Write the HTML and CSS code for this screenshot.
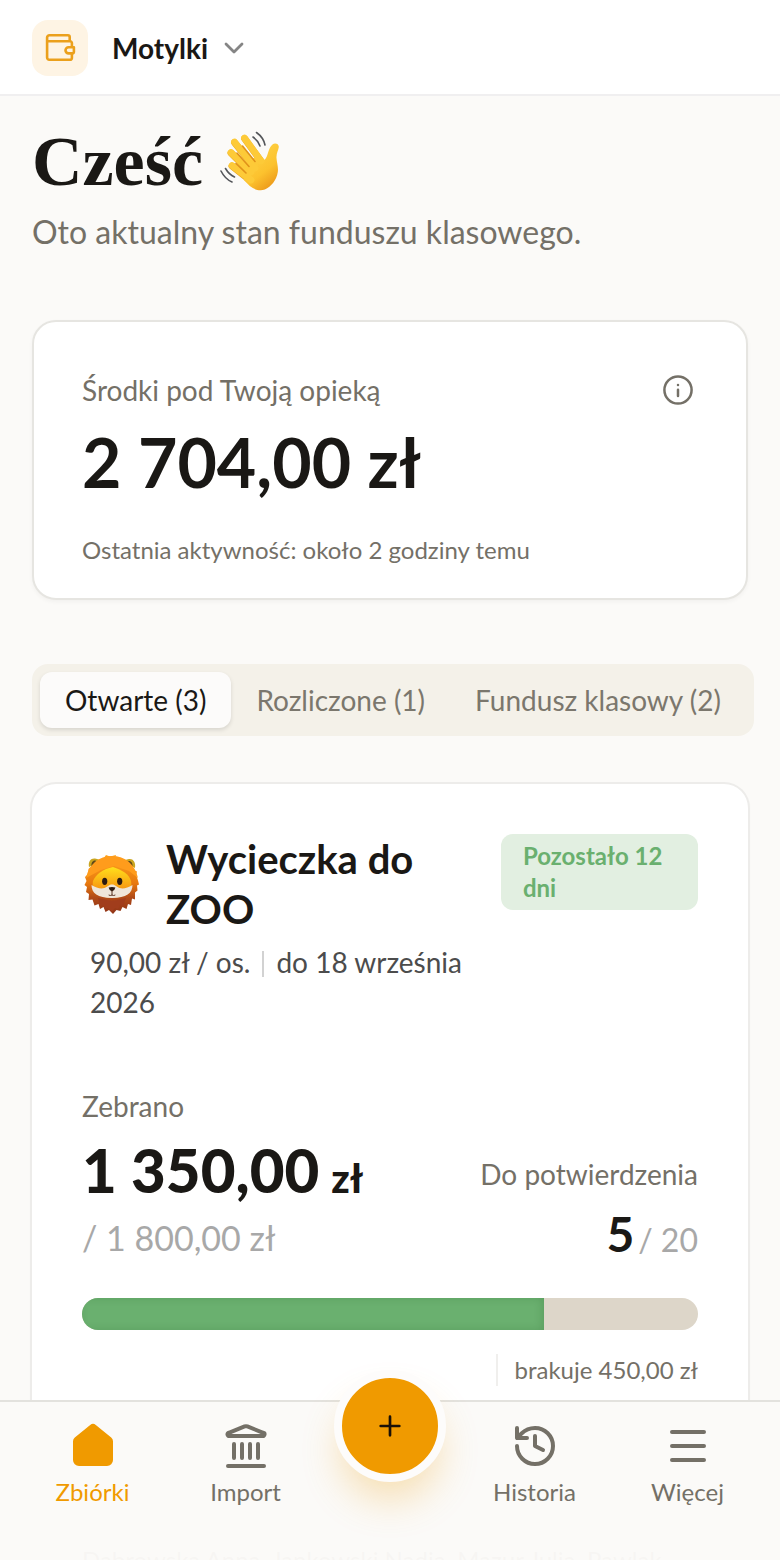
FILE: index.html
```html
<!DOCTYPE html>
<html lang="pl">
<head>
<meta charset="utf-8">
<meta name="viewport" content="width=device-width, initial-scale=1">
<title>Motylki – zbiórki</title>
<link rel="stylesheet" href="styles.css">
</head>
<body>
<div class="app">
  <header class="topbar">
    <span class="brand">
      <svg class="brand-icon" viewBox="0 0 32 32" aria-hidden="true">
        <path d="M25.700 9.300V5a1.800 1.800 0 0 0-1.800-1.800H5.500A2.400 2.400 0 0 0 3.100 5.600v20a2.200 2.200 0 0 0 2.200 2.200h20.800a1.800 1.800 0 0 0 1.800-1.800v-4.400M3.100 9.300H26.100a1.800 1.800 0 0 1 1.800 1.800v3.900"/>
        <path d="M29.900 15.200h-5.300a3.100 3.100 0 0 0 0 6.200h3.900a1.400 1.400 0 0 0 1.400-1.400z"/>
      </svg>
    </span>
    <button class="switcher" type="button">
      Motylki
      <svg class="chevron" viewBox="0 0 24 24" aria-hidden="true"><path d="M4 8l8 8 8-8"/></svg>
    </button>
  </header>

  <main class="content">
    <h1 class="greeting">Cześć
      <svg class="wave" viewBox="0 0 64 64" role="img" aria-label="Machająca dłoń">
        <defs>
          <linearGradient id="skin" x1="0" y1="0" x2="0.600" y2="1">
            <stop offset="0" stop-color="#ffd84f"/>
            <stop offset="0.700" stop-color="#fcc22e"/>
            <stop offset="1" stop-color="#ee9d1c"/>
          </linearGradient>
        </defs>
        <path class="finger-edge" d="M25.500 8.500L42 31M15.500 12.500L36 38M12 23L32 43M13 36L32 51"/>
        <path fill="url(#skin)" d="M28 29l14-2c3 4 4 3.500 6-1 1.500-4 2-8.500 5.500-11.500 2.600-2 6.500-.5 6.300 2.500-.3 3-2.600 6-2.300 11 .3 5 2 9 1.300 14-1.200 8-6.500 14.500-13 17.500-5 2-10.500 0-15-3.500l-6-6z"/>
        <path class="finger" d="M25.500 8L42 31M15.500 12L36 38M12 22.500L32 42M13 35.500L32 50"/>
        <path class="crease" d="M23.500 16L36 31.500M18 23L30 36.500M17 33.500L27 43"/>
        <path class="motion" d="M34 7q5 3.500 7 9M37.500 2.500q7 5 8.500 12.500M2 41q4 8 11 11M6.500 38.500q3.500 6 9 8.500"/>
      </svg>
    </h1>
    <p class="lead">Oto aktualny stan funduszu klasowego.</p>

    <section class="balance">
      <div class="balance-head">
        <h2 class="label">Środki pod Twoją opieką</h2>
        <button class="info" type="button" aria-label="Informacje">
          <svg viewBox="0 0 40 40" aria-hidden="true"><circle cx="20" cy="20" r="13.600"/><path d="M20 19.700v6.200M20 15v.1"/></svg>
        </button>
      </div>
      <p class="balance-amount">2 704,00 zł</p>
      <p class="balance-note">Ostatnia aktywność: około 2 godziny temu</p>
    </section>

    <div class="tabs" role="tablist">
      <button class="tab tab-active" type="button" role="tab" aria-selected="true">Otwarte (3)</button>
      <button class="tab" type="button" role="tab" aria-selected="false">Rozliczone (1)</button>
      <button class="tab" type="button" role="tab" aria-selected="false">Fundusz klasowy (2)</button>
    </div>

    <article class="fund">
      <div class="fund-head">
        <div class="fund-info">
          <div class="fund-name">
            <svg class="lion" viewBox="1 1 58 60" role="img" aria-label="Lew">
              <defs>
                <linearGradient id="mane" x1="0" y1="0" x2="0" y2="1">
                  <stop offset="0" stop-color="#ffa51d"/>
                  <stop offset="0.480" stop-color="#e8790f"/>
                  <stop offset="0.720" stop-color="#b04a18"/>
                  <stop offset="1" stop-color="#8f3417"/>
                </linearGradient>
                <linearGradient id="face" x1="0" y1="0" x2="0" y2="1">
                  <stop offset="0" stop-color="#ffe01b"/>
                  <stop offset="0.600" stop-color="#f9a213"/>
                  <stop offset="1" stop-color="#e27a1c"/>
                </linearGradient>
              </defs>
              <path fill="url(#mane)" d="M24 2l4 1.500L34 2l-.5 2 6 1 5 3 5 3.500 3 6 2.500 1-1 3 2 6 1 4-2 1 .5 5-2.500 2v7l-3-1-1 6.500-3-1-1.500 5-4-2-2 4-4-1-3.500 4-4-4-3.500 2-2-5-3.500 2-1.500-5-4 1.500-2-6-4 .5.500-6-3-2 1-5-2.500-2 2-4-1.500-4 3-3 .5-5 4-4 5-4 5-1z"/>
              <path fill="#c9a520" d="M7 14c-1-6 2-9 6-8.500 3 .3 5 1.500 5.500 3.500zM53 15c1-6-2-9.500-6-9-3 .3-5 1.500-5.500 3z"/>
              <path fill="#5f4a1a" d="M9.500 13c-.5-3.500 1.500-6 4-5.500l3 2zM50.500 13.500c.5-3.500-1.500-6-4-5.500l-3 1.500z"/>
              <path fill="#ff9c1c" d="M4 25C7 11 17 3 30 3s23 8 26 22l-9-7-15-5-13 4z"/>
              <path fill="url(#face)" d="M31 14c9 3 16 7 18 14 2 9-5 17-19 17S9 37 11 28c3-7 10-12 20-14z"/>
              <path fill="#efe5d9" d="M9.500 32c5 3 9 4 13 3 3-.8 4-3.500 7.500-3.500S34.500 34.200 37.500 35c4 1 8 0 13-3 0 8-6 13-20.500 13S9.500 40 9.500 32z"/>
              <path fill="#a13d1c" d="M21 46q9 3 18 0l5-1-3 8-3-1-2 4-3-1-3 4-4-4-3 1-2-4-3 1-2-8z"/>
              <ellipse class="ink" cx="22.700" cy="28.300" rx="2.600" ry="3.600"/>
              <ellipse class="ink" cx="37.700" cy="28.300" rx="2.600" ry="3.600"/>
              <path class="ink" d="M26.600 34.500q3.400-1.200 6.800 0-.6 3-3.400 4-2.800-1-3.400-4z"/>
              <path class="mouth" d="M30 38v4M27 42.200q1.500.8 3-.2 1.500 1 3 .2"/>
            </svg>
            <h3 class="fund-title">Wycieczka do ZOO</h3>
          </div>
          <p class="fund-meta">90,00 zł / os.<span class="bar-sep"></span>do 18 września 2026</p>
        </div>
        <span class="badge">Pozostało 12 dni</span>
      </div>

      <div class="stats">
        <div class="stat">
          <span class="label">Zebrano</span>
          <span class="raised"><span>1 350,00</span><span class="currency">zł</span></span>
          <span class="goal">/ 1 800,00 zł</span>
        </div>
        <div class="stat stat-end">
          <span class="label">Do potwierdzenia</span>
          <span class="count"><span>5</span><span class="count-total">/ 20</span></span>
        </div>
      </div>

      <div class="progress" role="progressbar" aria-label="Zebrano" aria-valuemin="0" aria-valuemax="1800" aria-valuenow="1350">
        <div class="progress-fill" style="width: 75%"></div>
      </div>
      <p class="missing"><span class="missing-text">brakuje 450,00 zł</span></p>
      <p class="people">Dąbrowska Anna, Jankowski Nadia, Mazur Julia, Pawlak</p>
    </article>
  </main>

  <nav class="bottom-nav" aria-label="Główna">
    <a class="nav-item nav-item-active" href="#zbiorki">
      <svg class="nav-icon nav-icon-solid" viewBox="0 0 24 24" aria-hidden="true"><path d="M10.600 1.500a2.200 2.200 0 0 1 2.800 0l7.700 6.200a2.400 2.400 0 0 1 .9 1.900V19a3 3 0 0 1-3 3H5a3 3 0 0 1-3-3V9.600a2.400 2.400 0 0 1 .9-1.900z"/></svg>
      Zbiórki
    </a>
    <a class="nav-item" href="#import">
      <svg class="nav-icon" viewBox="0 0 24 24" aria-hidden="true"><path d="M11.300 2.200a2 2 0 0 1 1.400 0l7.900 3.200a.8.800 0 0 1-.3 1.600H3.700a.8.800 0 0 1-.3-1.600zM6 11v7M10 11v7M14 11v7M18 11v7M3 22h18"/></svg>
      Import
    </a>
    <div class="fab-slot">
      <button class="fab" type="button" aria-label="Dodaj">
        <svg class="fab-icon" viewBox="0 0 24 24" aria-hidden="true"><path d="M5 12h14M12 5v14"/></svg>
      </button>
    </div>
    <a class="nav-item" href="#historia">
      <svg class="nav-icon" viewBox="0 0 24 24" aria-hidden="true"><path d="M3 12a9 9 0 1 0 9-9 9.750 9.750 0 0 0-6.740 2.740L3 8M3 3v5h5M12 7v5l4 2"/></svg>
      Historia
    </a>
    <a class="nav-item" href="#wiecej">
      <svg class="nav-icon" viewBox="0 0 24 24" aria-hidden="true"><path d="M4 5h16M4 12h16M4 19h16"/></svg>
      Więcej
    </a>
  </nav>
</div>
</body>
</html>
```

FILE: styles.css
```css
* {
  box-sizing: border-box;
}

body,
h1,
h2,
h3,
p {
  margin: 0;
}

body {
  background: #fbfaf8;
  color: #1a1815;
  font-family: Lato, "Liberation Sans", sans-serif;
  font-size: 28px;
  line-height: 40px;
}

button {
  border: 0;
  padding: 0;
  background: none;
  color: inherit;
  font: inherit;
  cursor: pointer;
}

svg {
  display: block;
  flex: none;
}

.app {
  position: relative;
  display: flex;
  flex-direction: column;
  height: 100vh;
  overflow: hidden;
}

/* Top bar */
.topbar {
  display: flex;
  flex: none;
  align-items: center;
  gap: 24px;
  padding: 20px 32px 18px;
  background: #fff;
  border-bottom: 2px solid #f0eff0;
}

.brand {
  display: grid;
  place-items: center;
  width: 56px;
  height: 56px;
  border-radius: 16px;
  background: #fef4e4;
}

.brand-icon {
  width: 32px;
  height: 32px;
  fill: none;
  stroke: #eba01c;
  stroke-width: 2.6;
  stroke-linejoin: round;
}

.switcher {
  display: flex;
  align-items: center;
  gap: 14px;
  font-weight: 700;
}

.chevron {
  width: 24px;
  height: 24px;
  fill: none;
  stroke: #858585;
  stroke-width: 2.8;
  stroke-linecap: round;
  stroke-linejoin: round;
}

/* Page content */
.content {
  flex: 1;
  padding: 26px 32px 0;
  overflow-y: auto;
  scrollbar-width: none;
}

.greeting {
  display: flex;
  align-items: center;
  gap: 16px;
  font-family: "Liberation Serif", serif;
  font-size: 70px;
  font-weight: 700;
  line-height: 80px;
}

.wave {
  width: 64px;
  height: 64px;
}

.finger,
.finger-edge {
  fill: none;
  stroke: #fdca38;
  stroke-width: 6.8;
  stroke-linecap: round;
}

.finger-edge {
  stroke: #e9a51f;
}

.crease {
  fill: none;
  stroke: #e0921a;
  stroke-width: 1.6;
  stroke-linecap: round;
}

.motion {
  fill: none;
  stroke: #54565a;
  stroke-width: 1.6;
  stroke-linecap: round;
}

.lead {
  margin-top: 6px;
  color: #747067;
  font-size: 32px;
  line-height: 48px;
}

.label {
  color: #747067;
  font-size: 28px;
  font-weight: 400;
  line-height: 40px;
}

/* Balance card */
.balance {
  margin-top: 64px;
  padding: 48px 48px 32px;
  border: 2px solid #e6e5e1;
  border-radius: 24px;
  background: #fff;
  box-shadow: 0 2px 4px rgba(0, 0, 0, 0.04);
}

.balance-head {
  display: flex;
  align-items: center;
  justify-content: space-between;
}

.info {
  width: 40px;
  height: 40px;
}

.info svg {
  fill: none;
  stroke: #747067;
  stroke-width: 2.5;
  stroke-linecap: round;
}

.balance-amount {
  margin-top: 16px;
  font-size: 68px;
  font-weight: 700;
  line-height: 72px;
}

.balance-note {
  margin-top: 36px;
  color: #747067;
  font-size: 24px;
  line-height: 32px;
}

/* Tabs */
.tabs {
  display: inline-flex;
  margin-top: 64px;
  padding: 8px;
  border-radius: 16px;
  background: #f4f1e9;
}

.tab {
  padding: 8px 25px;
  border-radius: 12px;
  color: #7b776d;
  white-space: nowrap;
}

.tab-active {
  background: #fcfbfa;
  color: #1a1815;
  box-shadow: 0 2px 4px rgba(0, 0, 0, 0.12);
}

/* Fundraiser card */
.fund {
  margin-top: 48px;
  padding: 50px;
  border-radius: 24px;
  background: #fff;
  box-shadow: 0 0 0 2px #edecea, 0 2px 4px rgba(0, 0, 0, 0.06);
}

.fund-head {
  display: flex;
  align-items: flex-start;
  gap: 24px;
}

.fund-info {
  flex: 1;
}

.fund-name {
  display: flex;
  align-items: center;
  gap: 24px;
}

.lion {
  width: 60px;
  height: 60px;
}

.ink {
  fill: #2c1a10;
}

.mouth {
  fill: none;
  stroke: #5a3524;
  stroke-width: 1;
  stroke-linecap: round;
}

.fund-title {
  font-size: 40px;
  font-weight: 700;
  line-height: 50px;
}

.fund-meta {
  margin-top: 8px;
  padding-left: 8px;
  color: #4c4c4c;
}

.bar-sep {
  display: inline-block;
  width: 2px;
  height: 26px;
  margin: 0 12px;
  background: #d2d2d2;
  vertical-align: -4px;
}

.badge {
  flex: 0 0 32%;
  padding: 6px 22px;
  border-radius: 12px;
  background: #e2efe1;
  color: #6ab06f;
  font-size: 24px;
  font-weight: 700;
  line-height: 32px;
}

.stats {
  display: flex;
  justify-content: space-between;
  margin-top: 64px;
}

.stat {
  display: flex;
  flex-direction: column;
}

.stat-end {
  align-items: flex-end;
  justify-content: flex-end;
}

.raised {
  display: flex;
  align-items: baseline;
  gap: 12px;
  margin-top: 8px;
  font-size: 60px;
  font-weight: 900;
  line-height: 72px;
}

.currency {
  font-size: 40px;
  line-height: 48px;
}

.goal {
  margin-top: 8px;
  color: #a8a8a8;
  font-size: 34px;
  line-height: 48px;
}

.count {
  display: flex;
  align-items: baseline;
  gap: 4px;
  margin-top: 12px;
  font-size: 48px;
  font-weight: 700;
  line-height: 56px;
}

.count-total {
  color: #a8a8a8;
  font-size: 32px;
  font-weight: 400;
  line-height: 40px;
}

.progress {
  height: 32px;
  margin-top: 36px;
  border-radius: 16px;
  background: #ddd6c9;
  overflow: hidden;
}

.progress-fill {
  height: 100%;
  background: #6ab06f;
  box-shadow: inset -2px 0 8px rgba(0, 60, 0, 0.14);
}

.missing {
  display: flex;
  justify-content: flex-end;
  margin-top: 24px;
  color: #747067;
  font-size: 24px;
  line-height: 32px;
}

.missing-text {
  padding-left: 16px;
  border-left: 2px solid #f0efed;
}

.people {
  margin-top: 158px;
  color: #747067;
  font-size: 24px;
  line-height: 32px;
}

/* Bottom navigation */
.bottom-nav {
  position: absolute;
  right: 0;
  bottom: 0;
  left: 0;
  display: grid;
  grid-template-columns: 1fr 1fr 136px 1fr 1fr;
  padding: 20px 16px 52px;
  border-top: 2px solid #e3e2de;
  background: rgba(251, 250, 248, 0.97);
}

.nav-item {
  display: flex;
  flex-direction: column;
  align-items: center;
  gap: 6px;
  color: #747067;
  font-size: 24px;
  line-height: 32px;
  text-decoration: none;
}

.nav-item-active {
  color: #f09a00;
}

.nav-icon {
  width: 48px;
  height: 48px;
  fill: none;
  stroke: currentColor;
  stroke-width: 2;
  stroke-linecap: round;
  stroke-linejoin: round;
}

.nav-icon-solid {
  fill: currentColor;
  stroke: none;
}

.fab-slot {
  position: relative;
}

/* The add button straddles the top edge of the bar */
.fab {
  position: absolute;
  bottom: 26px;
  left: 50%;
  display: grid;
  place-items: center;
  width: 112px;
  height: 112px;
  margin-left: -56px;
  border: 8px solid #fdfcfb;
  border-radius: 50%;
  background: #f09a00;
  box-shadow: 0 24px 40px -8px rgba(240, 154, 0, 0.3);
}

.fab-icon {
  width: 32px;
  height: 32px;
  fill: none;
  stroke: #1a1108;
  stroke-width: 2;
  stroke-linecap: round;
}
```
